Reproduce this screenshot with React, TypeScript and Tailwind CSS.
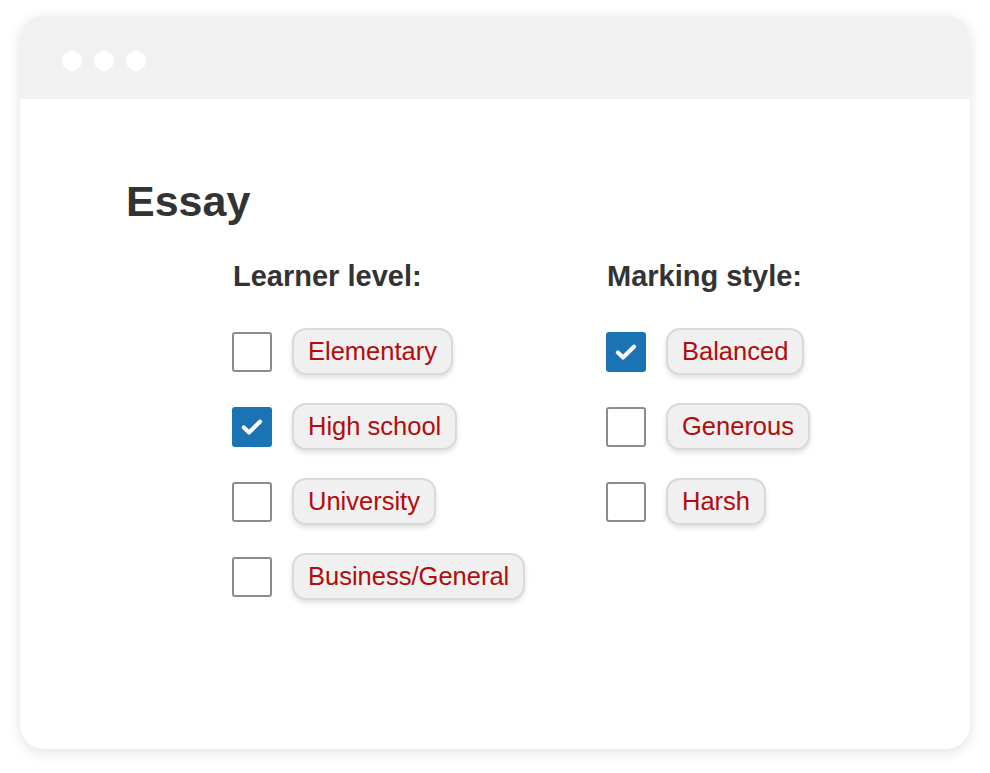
import React from 'react'

type Option = { label: string; checked?: boolean }

const learnerLevels: Option[] = [
  { label: 'Elementary' },
  { label: 'High school', checked: true },
  { label: 'University' },
  { label: 'Business/General' },
]

const markingStyles: Option[] = [
  { label: 'Balanced', checked: true },
  { label: 'Generous' },
  { label: 'Harsh' },
]

function Checkbox({ checked }: { checked?: boolean }) {
  if (checked) {
    return (
      <div className="w-10 h-10 rounded-[3px] bg-[#1a74b3] flex items-center justify-center">
        <svg width="26" height="26" viewBox="0 0 24 24" fill="none">
          <path
            d="M4.5 12.5l4.8 4.6L19.5 7"
            stroke="white"
            strokeWidth="3.8"
            strokeLinecap="round"
            strokeLinejoin="round"
          />
        </svg>
      </div>
    )
  }
  return <div className="w-10 h-10 rounded-[3px] border-2 border-[#8c8c8c] bg-white" />
}

function OptionRow({ option }: { option: Option }) {
  return (
    <div className="flex items-center gap-5 h-[47px]">
      <Checkbox checked={option.checked} />
      <div className="h-[47px] px-[14px] flex items-center rounded-[14px] bg-[#f0f0f0] border-2 border-[#d9d9d9] shadow-[0_3px_5px_rgba(0,0,0,0.12)] text-[25.5px] text-[#b20c0c] leading-none">
        {option.label}
      </div>
    </div>
  )
}

function OptionColumn({ title, options }: { title: string; options: Option[] }) {
  return (
    <div className="flex flex-col">
      <h2 className="text-[29px] font-bold leading-none text-[#333] pl-[1px]">{title}</h2>
      <div className="flex flex-col gap-[28px] mt-[37px]">
        {options.map((o) => (
          <OptionRow key={o.label} option={o} />
        ))}
      </div>
    </div>
  )
}

export default function App() {
  return (
    <div
      className="w-[990px] h-[773px] bg-white pt-[16px] pl-[20px]"
      style={{ fontFamily: '"Liberation Sans", Arial, sans-serif' }}
    >
      <div className="w-[950px] h-[733px] rounded-[24px] bg-white overflow-hidden shadow-[0_3px_14px_rgba(0,0,0,0.12)]">
        {/* Browser title bar */}
        <div className="h-[83px] bg-[#f1f1f1] flex gap-3 pl-[42px] pt-[35px]">
          <span className="w-5 h-5 rounded-full bg-white" />
          <span className="w-5 h-5 rounded-full bg-white" />
          <span className="w-5 h-5 rounded-full bg-white" />
        </div>

        <div className="pt-[81px] pl-[106px]">
          <h1 className="text-[43px] font-bold leading-none text-[#333]">Essay</h1>
          <div className="grid grid-cols-[374px_300px] mt-[39px] pl-[106px]">
            <OptionColumn title="Learner level:" options={learnerLevels} />
            <OptionColumn title="Marking style:" options={markingStyles} />
          </div>
        </div>
      </div>
    </div>
  )
}
